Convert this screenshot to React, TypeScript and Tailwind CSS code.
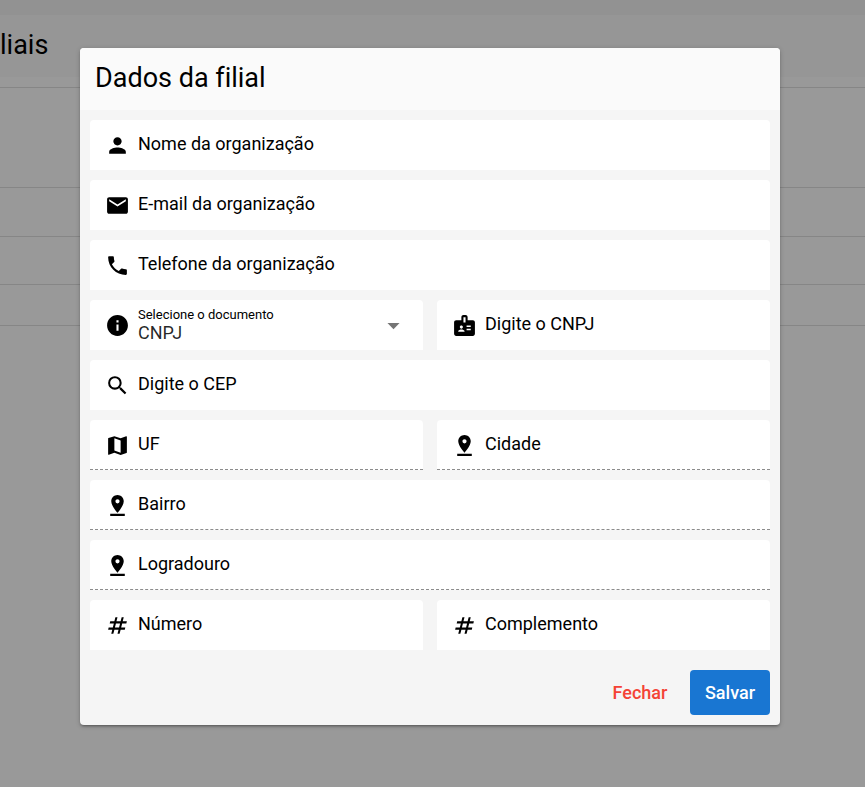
import { useId, type ReactNode } from "react";
import type { IconType } from "react-icons";
import {
  MdArrowDropDown,
  MdBadge,
  MdEmail,
  MdInfo,
  MdMap,
  MdNumbers,
  MdPerson,
  MdPhone,
  MdPinDrop,
  MdSearch,
} from "react-icons/md";

type FieldProps = {
  icon: IconType;
  label: string;
  type?: string;
  readOnly?: boolean;
};

function Field({ icon: Icon, label, type = "text", readOnly = false }: FieldProps) {
  const id = useId();
  const border = readOnly ? "border-b border-dashed border-black/45" : "";
  return (
    <div className={`flex h-[50px] min-w-0 rounded-t bg-white px-[15px] ${border}`}>
      <label htmlFor={id} className="flex h-[50px] shrink-0 items-center gap-2 pt-px">
        <Icon size={25} aria-hidden="true" />
        <span className="pb-[3px] text-lg leading-6">{label}</span>
      </label>
      <input
        id={id}
        type={type}
        readOnly={readOnly}
        className="ml-2 min-w-0 flex-1 bg-transparent text-lg outline-none"
      />
    </div>
  );
}

function DocumentSelect() {
  const id = useId();
  return (
    <div className="flex h-[50px] min-w-0 items-center gap-2 rounded-t bg-white px-[15px] pt-px">
      <MdInfo size={25} className="shrink-0" aria-hidden="true" />
      <div className="flex min-w-0 flex-1 flex-col pb-px">
        <label htmlFor={id} className="text-[13px] leading-4">
          Selecione o documento
        </label>
        <select
          id={id}
          defaultValue="CNPJ"
          className="h-5 w-full appearance-none bg-transparent text-lg leading-5 text-black/85 outline-none"
        >
          <option>CNPJ</option>
          <option>CPF</option>
        </select>
      </div>
      <MdArrowDropDown size={29} className="shrink-0 text-[#757575]" aria-hidden="true" />
    </div>
  );
}

function Row({ children }: { children: ReactNode }) {
  return <div className="grid auto-cols-fr grid-flow-col gap-3.5">{children}</div>;
}

function BranchesPage() {
  return (
    <div className="min-h-screen bg-white" aria-hidden="true">
      <div className="h-[15px] bg-[#f3f3f3]" />
      <div className="flex h-[62px] items-center bg-[#fafafa] pb-0.5 text-[27px] leading-8">liais</div>
      <div className="mt-2.5 border-y border-black/12">
        <div className="h-[99px]" />
        <div className="h-[49px] border-t border-black/12" />
        <div className="h-12 border-t border-black/12" />
        <div className="h-[41px] border-t border-black/12" />
      </div>
    </div>
  );
}

export default function App() {
  return (
    <div className="relative h-screen overflow-hidden font-[Roboto,sans-serif] text-black">
      <BranchesPage />
      <div className="absolute inset-0 flex items-start justify-center overflow-auto bg-black/40 pt-12 pr-[25px] pl-5">
        <div
          role="dialog"
          aria-modal="true"
          aria-labelledby="dialog-title"
          className="w-full max-w-[700px] overflow-hidden rounded bg-[#f5f5f5] shadow-[0_1px_5px_rgba(0,0,0,0.2),0_2px_2px_rgba(0,0,0,0.14),0_3px_1px_-2px_rgba(0,0,0,0.12)]"
        >
          <h2
            id="dialog-title"
            className="flex h-[62px] items-center bg-[#fafafa] px-[15px] pb-0.5 text-[27px] leading-8 [font-variant-ligatures:none]"
          >
            Dados da filial
          </h2>
          <form className="flex flex-col gap-2.5 p-2.5" onSubmit={(e) => e.preventDefault()}>
            <Row>
              <Field icon={MdPerson} label="Nome da organização" />
            </Row>
            <Row>
              <Field icon={MdEmail} label="E-mail da organização" type="email" />
            </Row>
            <Row>
              <Field icon={MdPhone} label="Telefone da organização" type="tel" />
            </Row>
            <Row>
              <DocumentSelect />
              <Field icon={MdBadge} label="Digite o CNPJ" />
            </Row>
            <Row>
              <Field icon={MdSearch} label="Digite o CEP" />
            </Row>
            <Row>
              <Field icon={MdMap} label="UF" readOnly />
              <Field icon={MdPinDrop} label="Cidade" readOnly />
            </Row>
            <Row>
              <Field icon={MdPinDrop} label="Bairro" readOnly />
            </Row>
            <Row>
              <Field icon={MdPinDrop} label="Logradouro" readOnly />
            </Row>
            <Row>
              <Field icon={MdNumbers} label="Número" />
              <Field icon={MdNumbers} label="Complemento" />
            </Row>
            <div className="flex justify-end gap-2.5 pt-2.5">
              <button type="button" className="h-[45px] w-20 rounded text-lg font-medium text-[#f44336]">
                Fechar
              </button>
              <button type="submit" className="h-[45px] w-20 rounded bg-[#1976d2] text-lg font-medium text-white">
                Salvar
              </button>
            </div>
          </form>
        </div>
      </div>
    </div>
  );
}
